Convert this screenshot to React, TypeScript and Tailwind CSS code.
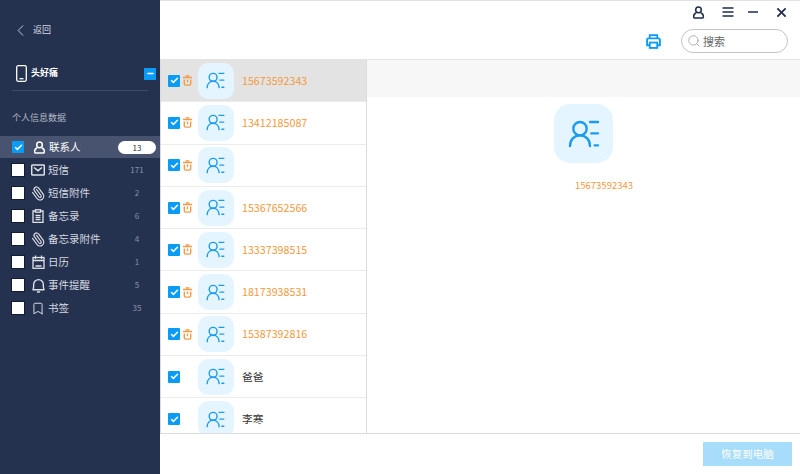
import React from "react";
import { ChevronLeft, Minus, Check, Search, Paperclip, Bookmark } from "lucide-react";

const font = "font-['Noto_Sans_CJK_SC','Noto_Sans',sans-serif]";

const ContactIcon = ({ big }: { big?: boolean }) => (
  <svg viewBox="0 0 24 24" fill="none" stroke="#1a9cf0" strokeWidth="1.8" strokeLinecap="round" className={big ? "w-[32px] h-[32px]" : "w-[19px] h-[19px] -ml-[2px]"}>
    <circle cx="9" cy="8" r="5" />
    <path d="M1.5 21c0-4.5 3-8 7.5-8s7.5 3.500 7.500 8" />
    <path d="M16.500 3h6M17.500 11.500h5M20 20.500h2.500" />
  </svg>
);

const TrashIcon = () => (
  <svg viewBox="0 0 12 12" fill="none" stroke="#f29a45" strokeWidth="1.5" className="w-[11px] h-[11px]">
    <path d="M1 2.700h10M4 1h4" />
    <path d="M2.500 5v4.500a1.500 1.500 0 0 0 1.500 1.500h4a1.500 1.500 0 0 0 1.500-1.500V5M6 5v3" />
  </svg>
);

const BlueCheck = () => (
  <span className="w-3 h-3 bg-[#0a9cf5] rounded-[1px] flex items-center justify-center shrink-0">
    <Check className="w-[9px] h-[9px] text-white" strokeWidth={4} />
  </span>
);

const PersonIcon = ({ className }: { className: string }) => (
  <svg viewBox="0 0 14 14" fill="none" stroke="currentColor" strokeWidth="1.6" className={className}>
    <circle cx="7" cy="4.200" r="3" />
    <path d="M4.500 7.500C2.800 8 1.800 9.300 1.800 11v1.200a.8.800 0 0 0 .8.800h8.800a.8.800 0 0 0 .8-.8V11c0-1.700-1-3-2.700-3.500" />
  </svg>
);

const MailIcon = () => (
  <svg viewBox="0 0 14 12" fill="none" stroke="currentColor" strokeWidth="1.500" className="w-[14px] h-[12px]">
    <rect x="0.700" y="1" width="12.600" height="10" rx="0.800" />
    <path d="M3 3.500l4 3.200 4-3.200" />
  </svg>
);

const ClipIcon = () => <Paperclip className="w-[15px] h-[15px] -scale-x-100 rotate-[8deg]" strokeWidth={1.8} />;

const NoteIcon = () => (
  <svg viewBox="0 0 12 14" fill="none" stroke="currentColor" strokeWidth="1.300" className="w-[12px] h-[14px]">
    <path d="M3.500 2H1v11.300h10V2H8.500" />
    <rect x="3.500" y="0.800" width="5" height="2.400" />
    <path d="M3.500 6.300h5M3.500 8.500h5M3.500 10.700h5" />
  </svg>
);

const CalendarIcon = () => (
  <svg viewBox="0 0 13 14" fill="none" stroke="currentColor" strokeWidth="1.300" className="w-[13px] h-[14px]">
    <rect x="1" y="2.500" width="11" height="10.800" />
    <path d="M3.500 0.500v3.500M9.500 0.500v3.500M1 5.500h11M3.500 11h6" />
  </svg>
);

const BellIcon = () => (
  <svg viewBox="0 0 14 14" fill="none" stroke="currentColor" strokeWidth="1.300" className="w-[15px] h-[15px]">
    <path d="M1.500 11C2.500 10.500 2.500 9 2.500 6a4.500 4.500 0 0 1 9 0c0 3 0 4.500 1 5z" />
    <path d="M5.500 13h3" />
  </svg>
);

const PhoneIcon = () => (
  <svg viewBox="0 0 11 17" fill="none" stroke="currentColor" strokeWidth="1.300" className="w-[11px] h-[17px]">
    <rect x="0.700" y="0.700" width="9.600" height="15.600" rx="1.500" />
    <path d="M3.500 13.700h4" />
  </svg>
);

const PrinterIcon = () => (
  <svg viewBox="0 0 14 14" fill="none" stroke="#0a9cf5" strokeWidth="1.700" className="w-[15px] h-[15px]">
    <path d="M3.500 4V1h7v3" />
    <path d="M3.500 10.500H1V5.500A1.500 1.500 0 0 1 2.500 4h9A1.500 1.500 0 0 1 13 5.500v5h-2.500" />
    <rect x="3.500" y="8" width="7" height="5" />
  </svg>
);

const categories = [
  { name: "短信", count: 171, icon: <MailIcon /> },
  { name: "短信附件", count: 2, icon: <ClipIcon /> },
  { name: "备忘录", count: 6, icon: <NoteIcon /> },
  { name: "备忘录附件", count: 4, icon: <ClipIcon /> },
  { name: "日历", count: 1, icon: <CalendarIcon /> },
  { name: "事件提醒", count: 5, icon: <BellIcon /> },
  { name: "书签", count: 35, icon: <Bookmark className="w-[14px] h-[15px]" strokeWidth={1.6} /> },
];

const contacts = [
  { label: "15673592343", deleted: true },
  { label: "13412185087", deleted: true },
  { label: "", deleted: true },
  { label: "15367652566", deleted: true },
  { label: "13337398515", deleted: true },
  { label: "18173938531", deleted: true },
  { label: "15387392816", deleted: true },
  { label: "爸爸", deleted: false },
  { label: "李寒", deleted: false },
];

export default function App() {
  return (
    <div className={`w-[800px] h-[474px] flex overflow-hidden bg-white ${font}`}>
      {/* sidebar */}
      <aside className="w-[160px] shrink-0 bg-[#25324f] text-white flex flex-col">
        <div className="h-[60px] flex items-center pl-[11px] gap-[3px]">
          <ChevronLeft className="w-[19px] h-[19px] text-[#c9ced8]" strokeWidth={1.2} />
          <span className="text-[9px] text-[#d5d9e0]">返回</span>
        </div>
        <div className="mx-[12px] h-[31px] border-b border-[#3f4c68] flex items-center justify-between">
          <div className="flex items-center gap-[4px] ml-[4px] mt-[-4px]">
            <PhoneIcon />
            <span className="text-[9px] font-bold">头好痛</span>
          </div>
          <span className="w-3 h-3 bg-[#0a9cf5] flex items-center justify-center mt-[-3px] mr-[-8px]">
            <Minus className="w-[9px] h-[9px]" strokeWidth={4} />
          </span>
        </div>
        <div className="text-[9px] text-[#b4b9c4] pl-[12px] mt-[20px] leading-[14px]">个人信息数据</div>
        <div className="mt-[11px] h-[22px] bg-[#47536f] flex items-center pl-[12px] pr-[4px]">
          <BlueCheck />
          <PersonIcon className="w-[13px] h-[13px] ml-[9px]" />
          <span className="text-[10.500px] ml-[3px]">联系人</span>
          <span className="ml-auto w-[38px] h-[13px] bg-white rounded-full text-[#333] text-[8px] leading-[13px] text-center">13</span>
        </div>
        <div className="flex flex-col mt-[0.500px]">
          {categories.map((c) => (
            <div key={c.name} className="h-[23px] flex items-center pl-[12px]">
              <span className="w-3 h-3 bg-white shrink-0 shadow-[0_0_0_1px_#131c30]" />
              <span className="w-[16px] ml-[6px] flex justify-center text-[#dfe2e8]">{c.icon}</span>
              <span className="text-[10.500px] ml-[2px] text-[#d5d9e0]">{c.name}</span>
              <span className="ml-auto w-[30px] mr-[8px] text-center text-[8px] text-[#8a92a4]">{c.count}</span>
            </div>
          ))}
        </div>
      </aside>

      {/* main */}
      <div className="flex-1 flex flex-col min-w-0">
        <header className="h-[60px] shrink-0 border-b border-t border-[#e3e3e3] flex flex-col">
          <div className="h-[22px] flex items-center justify-end pr-[13px] text-[#1e2b4a]">
            <PersonIcon className="w-[13px] h-[13px]" />
            <svg viewBox="0 0 12 12" fill="none" stroke="currentColor" strokeWidth="1.500" className="w-[12px] h-[12px] ml-[17px]">
              <path d="M0.500 2h11M0.500 6h11M0.500 10h11" />
            </svg>
            <svg viewBox="0 0 12 12" fill="none" stroke="currentColor" strokeWidth="1.500" className="w-[12px] h-[12px] ml-[13px]">
              <path d="M1 6h10" />
            </svg>
            <svg viewBox="0 0 12 12" fill="none" stroke="currentColor" strokeWidth="1.900" className="w-[11px] h-[11px] ml-[17px]">
              <path d="M1.500 1.500l9 9M10.500 1.500l-9 9" />
            </svg>
          </div>
          <div className="flex-1 flex items-center justify-end pr-[12px]">
            <span className="mr-[20px]"><PrinterIcon /></span>
            <div className="w-[107px] h-[24px] rounded-full border border-[#c4c4c4] flex items-center pl-[5px] gap-[2px]">
              <Search className="w-[14px] h-[14px] text-[#a5a5a5]" strokeWidth={1.500} />
              <span className="text-[11px] text-[#666]">搜索</span>
            </div>
          </div>
        </header>

        <div className="flex-1 flex min-h-0">
          {/* list */}
          <div className="w-[207px] shrink-0 border-l border-r border-[#dcdcdc] overflow-hidden">
            {contacts.map((c, i) => (
              <div key={i} className={`h-[42.300px] flex items-center pl-[7px] border-b border-[#ececec] ${i === 0 ? "bg-[#e3e3e3]" : ""}`}>
                <BlueCheck />
                <span className="w-[12px] ml-[1px] flex justify-center">{c.deleted && <TrashIcon />}</span>
                <span className="w-[36px] h-[36px] ml-[5px] rounded-[10px] bg-[#e5f5ff] flex items-center justify-center shrink-0">
                  <ContactIcon />
                </span>
                <span className={`ml-[8px] text-[10.700px] ${c.deleted ? "text-[#f39a3c]" : "text-[#333]"}`}>{c.label}</span>
              </div>
            ))}
          </div>
          {/* detail */}
          <div className="flex-1 flex flex-col items-center">
            <div className="w-full h-[37px] bg-[#f7f7f7]" />
            <span className="w-[59px] h-[59px] mt-[7px] rounded-[16px] bg-[#e5f5ff] flex items-center justify-center">
              <ContactIcon big />
            </span>
            <span className="mt-[15px] ml-[41px] text-[9.500px] text-[#f39a3c] leading-[14px]">15673592343</span>
          </div>
        </div>

        <footer className="h-[41px] shrink-0 border-t border-[#dcdcdc] flex items-center justify-end pr-[8px]">
          <button className="w-[89px] h-[24px] bg-[#a8dcfb] text-white text-[10.500px]">恢复到电脑</button>
        </footer>
      </div>
    </div>
  );
}
